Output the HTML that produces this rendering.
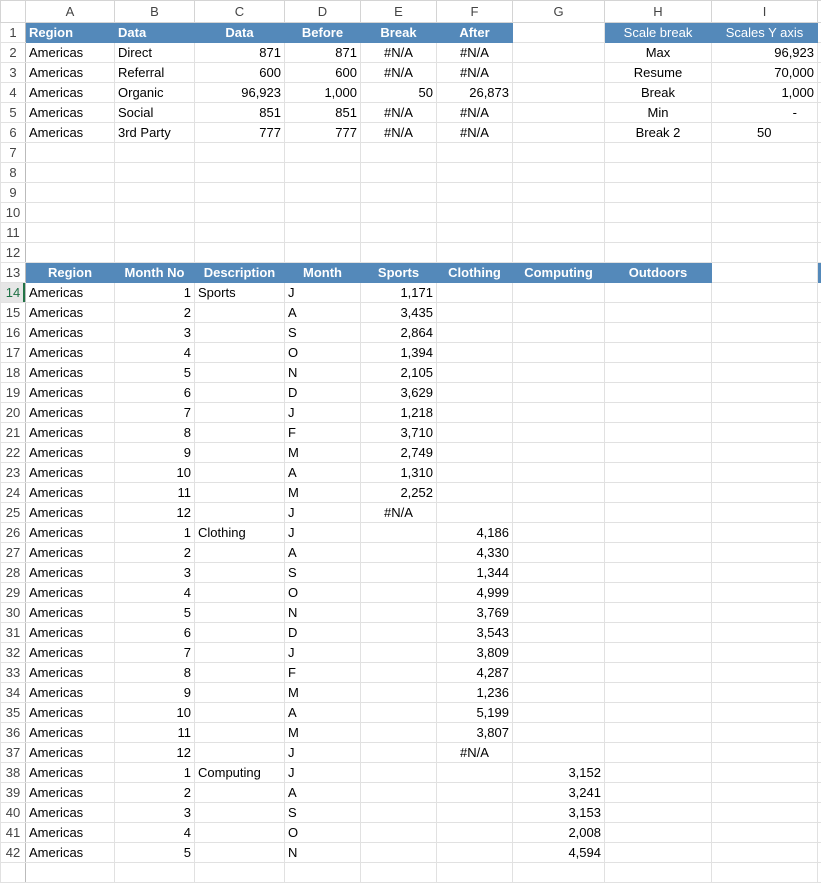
<!DOCTYPE html>
<html><head><meta charset="utf-8"><style>
body{margin:0;background:#fff;width:821px;height:865px;overflow:hidden}
table{border-collapse:collapse;table-layout:fixed;width:837px;font-family:"Liberation Sans",Arial,sans-serif;font-size:13px;color:#000}
td{border:1px solid #e1e1e1;height:19px;padding:0 3px;white-space:nowrap;overflow:hidden;line-height:19px}
tr.ch td{height:21px;text-align:center;color:#444;background:#fff;border-color:#d4d4d4}
td.rh{text-align:center;color:#444;padding:0;background:#fff;border-right:1px solid #bbb}
td.sel{background:#e6e6e6;color:#1e7145;box-shadow:inset -2px 0 0 #217346}
.b{background:#5489ba;color:#fff;font-weight:bold;border-color:#5489ba}
.bn{background:#5489ba;color:#fff;border-color:#5489ba}
.r{text-align:right}.c{text-align:center}
</style></head><body>
<table>
<colgroup><col style="width:25px"><col style="width:89px"><col style="width:80px"><col style="width:90px"><col style="width:76px"><col style="width:76px"><col style="width:76px"><col style="width:92px"><col style="width:107px"><col style="width:106px"><col style="width:20px"></colgroup>
<tr class="ch"><td></td><td>A</td><td>B</td><td>C</td><td>D</td><td>E</td><td>F</td><td>G</td><td>H</td><td>I</td><td></td></tr>
<tr><td class="rh">1</td><td class="b">Region</td><td class="b">Data</td><td class="b c">Data</td><td class="b c">Before</td><td class="b c">Break</td><td class="b c">After</td><td></td><td class="bn c">Scale break</td><td class="bn c">Scales Y axis</td><td></td></tr>
<tr><td class="rh">2</td><td>Americas</td><td>Direct</td><td class="r">871</td><td class="r">871</td><td class="c">#N/A</td><td class="c">#N/A</td><td></td><td class="c">Max</td><td class="r">96,923</td><td></td></tr>
<tr><td class="rh">3</td><td>Americas</td><td>Referral</td><td class="r">600</td><td class="r">600</td><td class="c">#N/A</td><td class="c">#N/A</td><td></td><td class="c">Resume</td><td class="r">70,000</td><td></td></tr>
<tr><td class="rh">4</td><td>Americas</td><td>Organic</td><td class="r">96,923</td><td class="r">1,000</td><td class="r">50</td><td class="r">26,873</td><td></td><td class="c">Break</td><td class="r">1,000</td><td></td></tr>
<tr><td class="rh">5</td><td>Americas</td><td>Social</td><td class="r">851</td><td class="r">851</td><td class="c">#N/A</td><td class="c">#N/A</td><td></td><td class="c">Min</td><td class="r" style="padding-right:20px">-</td><td></td></tr>
<tr><td class="rh">6</td><td>Americas</td><td>3rd Party</td><td class="r">777</td><td class="r">777</td><td class="c">#N/A</td><td class="c">#N/A</td><td></td><td class="c">Break 2</td><td style="padding-left:45px">50</td><td></td></tr>
<tr><td class="rh">7</td><td></td><td></td><td></td><td></td><td></td><td></td><td></td><td></td><td></td><td></td></tr>
<tr><td class="rh">8</td><td></td><td></td><td></td><td></td><td></td><td></td><td></td><td></td><td></td><td></td></tr>
<tr><td class="rh">9</td><td></td><td></td><td></td><td></td><td></td><td></td><td></td><td></td><td></td><td></td></tr>
<tr><td class="rh">10</td><td></td><td></td><td></td><td></td><td></td><td></td><td></td><td></td><td></td><td></td></tr>
<tr><td class="rh">11</td><td></td><td></td><td></td><td></td><td></td><td></td><td></td><td></td><td></td><td></td></tr>
<tr><td class="rh">12</td><td></td><td></td><td></td><td></td><td></td><td></td><td></td><td></td><td></td><td></td></tr>
<tr><td class="rh">13</td><td class="b c">Region</td><td class="b c">Month No</td><td class="b c">Description</td><td class="b c">Month</td><td class="b c">Sports</td><td class="b c">Clothing</td><td class="b c">Computing</td><td class="b c">Outdoors</td><td></td><td class="b"></td></tr>
<tr><td class="rh sel">14</td><td>Americas</td><td class="r">1</td><td>Sports</td><td>J</td><td class="r">1,171</td><td></td><td></td><td></td><td></td><td></td></tr>
<tr><td class="rh">15</td><td>Americas</td><td class="r">2</td><td></td><td>A</td><td class="r">3,435</td><td></td><td></td><td></td><td></td><td></td></tr>
<tr><td class="rh">16</td><td>Americas</td><td class="r">3</td><td></td><td>S</td><td class="r">2,864</td><td></td><td></td><td></td><td></td><td></td></tr>
<tr><td class="rh">17</td><td>Americas</td><td class="r">4</td><td></td><td>O</td><td class="r">1,394</td><td></td><td></td><td></td><td></td><td></td></tr>
<tr><td class="rh">18</td><td>Americas</td><td class="r">5</td><td></td><td>N</td><td class="r">2,105</td><td></td><td></td><td></td><td></td><td></td></tr>
<tr><td class="rh">19</td><td>Americas</td><td class="r">6</td><td></td><td>D</td><td class="r">3,629</td><td></td><td></td><td></td><td></td><td></td></tr>
<tr><td class="rh">20</td><td>Americas</td><td class="r">7</td><td></td><td>J</td><td class="r">1,218</td><td></td><td></td><td></td><td></td><td></td></tr>
<tr><td class="rh">21</td><td>Americas</td><td class="r">8</td><td></td><td>F</td><td class="r">3,710</td><td></td><td></td><td></td><td></td><td></td></tr>
<tr><td class="rh">22</td><td>Americas</td><td class="r">9</td><td></td><td>M</td><td class="r">2,749</td><td></td><td></td><td></td><td></td><td></td></tr>
<tr><td class="rh">23</td><td>Americas</td><td class="r">10</td><td></td><td>A</td><td class="r">1,310</td><td></td><td></td><td></td><td></td><td></td></tr>
<tr><td class="rh">24</td><td>Americas</td><td class="r">11</td><td></td><td>M</td><td class="r">2,252</td><td></td><td></td><td></td><td></td><td></td></tr>
<tr><td class="rh">25</td><td>Americas</td><td class="r">12</td><td></td><td>J</td><td class="c">#N/A</td><td></td><td></td><td></td><td></td><td></td></tr>
<tr><td class="rh">26</td><td>Americas</td><td class="r">1</td><td>Clothing</td><td>J</td><td></td><td class="r">4,186</td><td></td><td></td><td></td><td></td></tr>
<tr><td class="rh">27</td><td>Americas</td><td class="r">2</td><td></td><td>A</td><td></td><td class="r">4,330</td><td></td><td></td><td></td><td></td></tr>
<tr><td class="rh">28</td><td>Americas</td><td class="r">3</td><td></td><td>S</td><td></td><td class="r">1,344</td><td></td><td></td><td></td><td></td></tr>
<tr><td class="rh">29</td><td>Americas</td><td class="r">4</td><td></td><td>O</td><td></td><td class="r">4,999</td><td></td><td></td><td></td><td></td></tr>
<tr><td class="rh">30</td><td>Americas</td><td class="r">5</td><td></td><td>N</td><td></td><td class="r">3,769</td><td></td><td></td><td></td><td></td></tr>
<tr><td class="rh">31</td><td>Americas</td><td class="r">6</td><td></td><td>D</td><td></td><td class="r">3,543</td><td></td><td></td><td></td><td></td></tr>
<tr><td class="rh">32</td><td>Americas</td><td class="r">7</td><td></td><td>J</td><td></td><td class="r">3,809</td><td></td><td></td><td></td><td></td></tr>
<tr><td class="rh">33</td><td>Americas</td><td class="r">8</td><td></td><td>F</td><td></td><td class="r">4,287</td><td></td><td></td><td></td><td></td></tr>
<tr><td class="rh">34</td><td>Americas</td><td class="r">9</td><td></td><td>M</td><td></td><td class="r">1,236</td><td></td><td></td><td></td><td></td></tr>
<tr><td class="rh">35</td><td>Americas</td><td class="r">10</td><td></td><td>A</td><td></td><td class="r">5,199</td><td></td><td></td><td></td><td></td></tr>
<tr><td class="rh">36</td><td>Americas</td><td class="r">11</td><td></td><td>M</td><td></td><td class="r">3,807</td><td></td><td></td><td></td><td></td></tr>
<tr><td class="rh">37</td><td>Americas</td><td class="r">12</td><td></td><td>J</td><td></td><td class="c">#N/A</td><td></td><td></td><td></td><td></td></tr>
<tr><td class="rh">38</td><td>Americas</td><td class="r">1</td><td>Computing</td><td>J</td><td></td><td></td><td class="r">3,152</td><td></td><td></td><td></td></tr>
<tr><td class="rh">39</td><td>Americas</td><td class="r">2</td><td></td><td>A</td><td></td><td></td><td class="r">3,241</td><td></td><td></td><td></td></tr>
<tr><td class="rh">40</td><td>Americas</td><td class="r">3</td><td></td><td>S</td><td></td><td></td><td class="r">3,153</td><td></td><td></td><td></td></tr>
<tr><td class="rh">41</td><td>Americas</td><td class="r">4</td><td></td><td>O</td><td></td><td></td><td class="r">2,008</td><td></td><td></td><td></td></tr>
<tr><td class="rh">42</td><td>Americas</td><td class="r">5</td><td></td><td>N</td><td></td><td></td><td class="r">4,594</td><td></td><td></td><td></td></tr>
<tr><td class="rh"></td><td></td><td></td><td></td><td></td><td></td><td></td><td></td><td></td><td></td><td></td></tr>
</table>
</body></html>
